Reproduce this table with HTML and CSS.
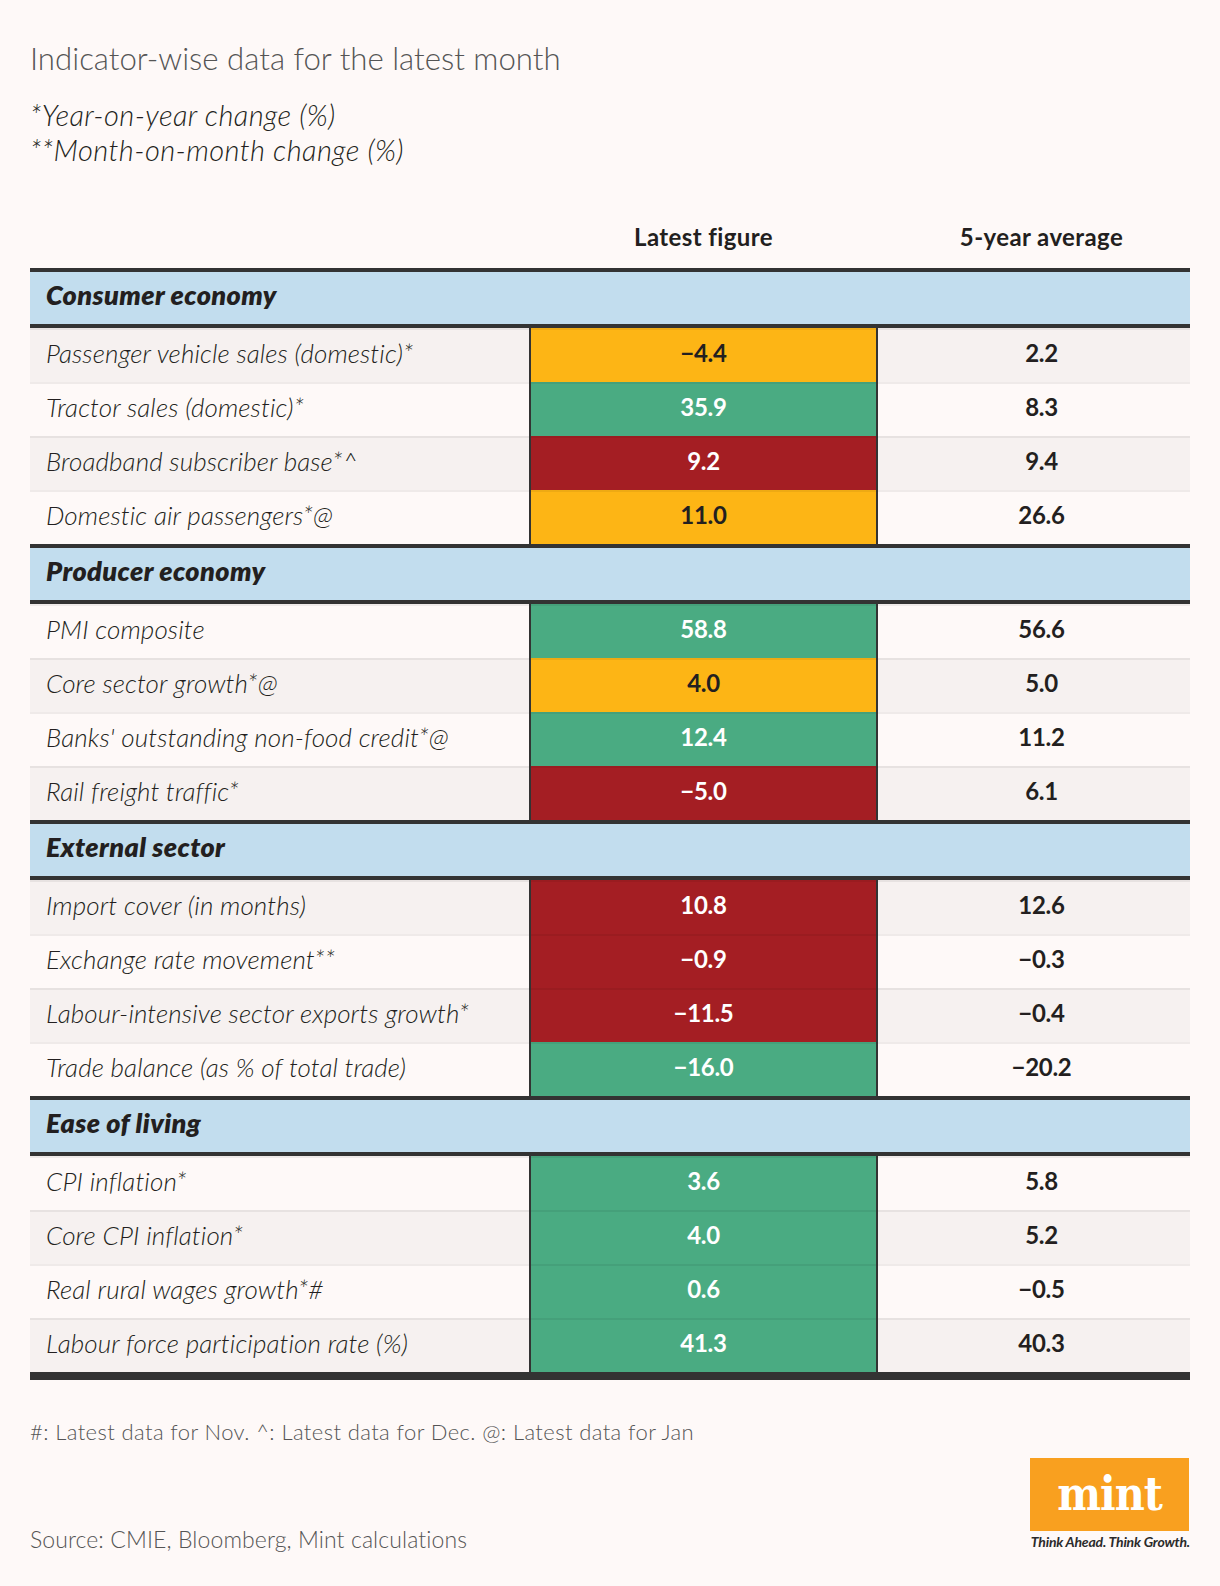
FILE: index.html
```html
<!DOCTYPE html>
<html lang="en">
<head>
<meta charset="utf-8">
<title>Indicator-wise data for the latest month</title>
<link rel="stylesheet" href="styles.css">
</head>
<body>
<div class="page">
  <h1 class="title">Indicator-wise data for the latest month</h1>
  <p class="notes">*Year-on-year change (%)<br>**Month-on-month change (%)</p>

  <div class="colhead">
    <div></div>
    <div class="ch">Latest figure</div>
    <div class="ch c3">5-year average</div>
  </div>

  <div class="table">
    <div class="section">Consumer economy</div>
    <div class="row shade"><div class="label">Passenger vehicle sales (domestic)*</div><div class="val v2 amber">−4.4</div><div class="val v3">2.2</div></div>
    <div class="row"><div class="label">Tractor sales (domestic)*</div><div class="val v2 green">35.9</div><div class="val v3">8.3</div></div>
    <div class="row shade"><div class="label">Broadband subscriber base*^</div><div class="val v2 red">9.2</div><div class="val v3">9.4</div></div>
    <div class="row"><div class="label">Domestic air passengers*@</div><div class="val v2 amber">11.0</div><div class="val v3">26.6</div></div>

    <div class="section">Producer economy</div>
    <div class="row"><div class="label">PMI composite</div><div class="val v2 green">58.8</div><div class="val v3">56.6</div></div>
    <div class="row shade"><div class="label">Core sector growth*@</div><div class="val v2 amber">4.0</div><div class="val v3">5.0</div></div>
    <div class="row"><div class="label">Banks' outstanding non-food credit*@</div><div class="val v2 green">12.4</div><div class="val v3">11.2</div></div>
    <div class="row shade"><div class="label">Rail freight traffic*</div><div class="val v2 red">−5.0</div><div class="val v3">6.1</div></div>

    <div class="section">External sector</div>
    <div class="row shade"><div class="label">Import cover (in months)</div><div class="val v2 red">10.8</div><div class="val v3">12.6</div></div>
    <div class="row"><div class="label">Exchange rate movement**</div><div class="val v2 red">−0.9</div><div class="val v3">−0.3</div></div>
    <div class="row shade"><div class="label">Labour-intensive sector exports growth*</div><div class="val v2 red">−11.5</div><div class="val v3">−0.4</div></div>
    <div class="row"><div class="label">Trade balance (as % of total trade)</div><div class="val v2 green">−16.0</div><div class="val v3">−20.2</div></div>

    <div class="section">Ease of living</div>
    <div class="row"><div class="label">CPI inflation*</div><div class="val v2 green">3.6</div><div class="val v3">5.8</div></div>
    <div class="row shade"><div class="label">Core CPI inflation*</div><div class="val v2 green">4.0</div><div class="val v3">5.2</div></div>
    <div class="row"><div class="label">Real rural wages growth*#</div><div class="val v2 green">0.6</div><div class="val v3">−0.5</div></div>
    <div class="row shade"><div class="label">Labour force participation rate (%)</div><div class="val v2 green">41.3</div><div class="val v3">40.3</div></div>
    <div class="table-end"></div>
  </div>

  <p class="footnote">#: Latest data for Nov. ^: Latest data for Dec. @: Latest data for Jan</p>

  <div class="footer">
    <p class="source">Source: CMIE, Bloomberg, Mint calculations</p>
    <div class="logo">
      <div class="logo-box">mint</div>
      <div class="tagline">Think Ahead. Think Growth.</div>
    </div>
  </div>
</div>
</body>
</html>
```

FILE: styles.css
```css
body {
  margin: 0;
  background: #fef9f8;
  font-family: Lato, "Open Sans", sans-serif;
  color: #231f20;
}

.page {
  width: 1160px;
  padding: 39px 30px 0;
}

.title {
  margin: 0;
  font-size: 31.2px;
  line-height: 38px;
  font-weight: 300;
  color: #555555;
}

.notes {
  margin: 20px 0 0;
  font-size: 29px;
  line-height: 35px;
  font-weight: 300;
  font-style: italic;
  letter-spacing: 0.4px;
  color: #231f20;
}

.colhead,
.row {
  display: grid;
  grid-template-columns: 499px 347px 314px;
}

.colhead {
  margin-top: 56px;
  margin-bottom: 17px;
}

.ch {
  font-size: 24px;
  line-height: 28px;
  font-weight: 700;
  letter-spacing: 0.4px;
  text-align: center;
  padding-left: 2px;
}

.ch.c3 {
  padding-left: 17px;
}

.table {
  display: flex;
  flex-direction: column;
}

.section {
  border-top: 4px solid #333333;
  border-bottom: 4px solid #333333;
  background: #c2ddee;
  padding: 0 0 6px 16px;
  font-size: 27px;
  line-height: 46px;
  font-weight: 800;
  font-style: italic;
  letter-spacing: 0.4px;
}

.row > div {
  padding-top: 2px;
  padding-bottom: 6px;
  line-height: 46px;
  box-shadow: inset 0 2px 0 rgba(0, 0, 0, 0.06);
}

.row.shade {
  background: #f6f1f0;
}

.label {
  padding-left: 16px;
  font-size: 26px;
  font-weight: 300;
  font-style: italic;
  letter-spacing: 0.1px;
}

.val {
  font-size: 24px;
  font-weight: 700;
  text-align: center;
  border-left: 2px solid #333333;
  letter-spacing: -0.3px;
}

.v3 {
  padding-left: 15px;
}

.amber {
  background: #fdb515;
  color: #231f20;
}

.green {
  background: #4aab82;
  color: #ffffff;
}

.red {
  background: #a41e23;
  color: #ffffff;
}

.table-end {
  height: 8px;
  background: #333333;
}

.footnote {
  margin: 39px 0 0;
  font-size: 22px;
  line-height: 26px;
  font-weight: 300;
  letter-spacing: 0.4px;
  color: #555555;
}

.footer {
  margin-top: 13px;
  display: flex;
  justify-content: space-between;
  align-items: flex-end;
}

.source {
  margin: 0;
  font-size: 23px;
  line-height: 26px;
  font-weight: 300;
  letter-spacing: 0.1px;
  color: #555555;
}

.logo {
  display: flex;
  flex-direction: column;
  align-items: flex-end;
  margin-bottom: 2px;
}

.logo-box {
  width: 159px;
  height: 73px;
  background: #f9a01f;
  color: #ffffff;
  font-family: "DejaVu Serif", "Liberation Serif", serif;
  font-weight: 700;
  font-stretch: condensed;
  font-size: 46px;
  line-height: 73px;
  text-align: center;
  letter-spacing: -1px;
  margin-right: 1px;
}

.tagline {
  margin-top: 3px;
  font-size: 14px;
  line-height: 16px;
  font-weight: 700;
  font-style: italic;
  color: #2b2b2b;
  letter-spacing: -0.2px;
}
```
